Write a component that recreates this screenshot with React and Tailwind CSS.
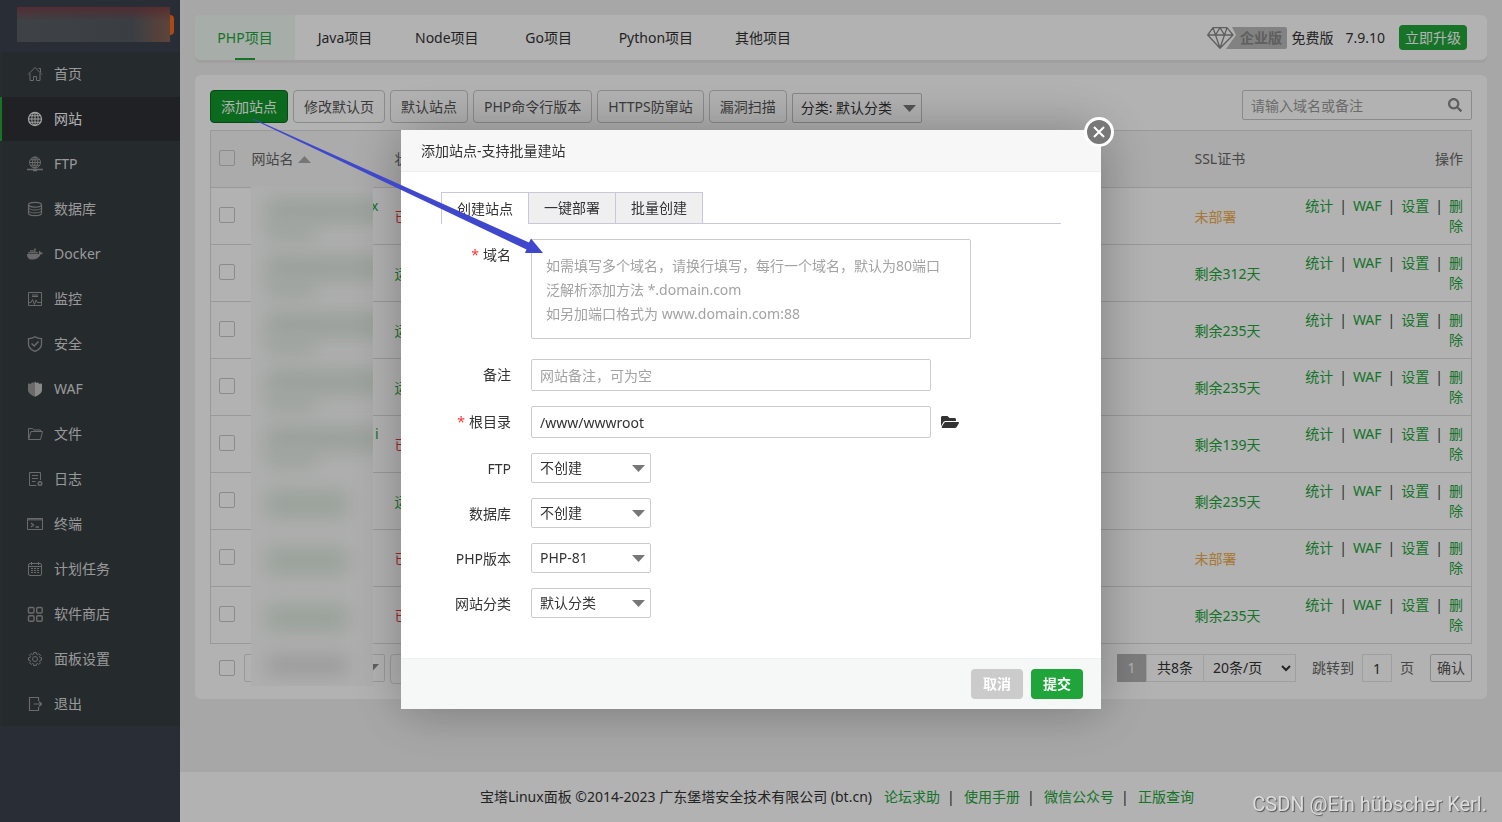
import React, { useState } from 'react';
import clsx from 'clsx';
import { FaFolderOpen, FaSearch, FaDocker } from 'react-icons/fa';

const Svg = ({ children }) => (
  <svg viewBox="0 0 16 16" className="w-4 h-4 shrink-0" fill="none" stroke="currentColor" strokeWidth="1" aria-hidden="true">
    {children}
  </svg>
);

const icons = {
  home: (
    <Svg>
      <path d="M1 8.5 8 1.5l7 7M11.5 2.500h2v4M3 7.500v7h3.500v-4h3v4H13v-7" />
    </Svg>
  ),
  globe: (
    <Svg>
      <circle cx="8" cy="8" r="6.5" strokeWidth="1.300" />
      <ellipse cx="8" cy="8" rx="3.2" ry="6.5" />
      <path d="M8 1.5v13M1.5 8h13M2.5 4.8h11M2.5 11.2h11" />
    </Svg>
  ),
  ftp: (
    <Svg>
      <circle cx="8" cy="6.5" r="5.5" />
      <ellipse cx="8" cy="6.5" rx="2.6" ry="5.5" />
      <path d="M8 1v11M2.5 6.5h11M3.4 3.8h9.2M3.4 9.2h9.2" />
      <path d="M0 13.5h16M6 14.5h4" strokeWidth="1.5" />
    </Svg>
  ),
  database: (
    <Svg>
      <ellipse cx="8" cy="3.7" rx="6.5" ry="2.4" strokeWidth="1.200" />
      <path d="M1.5 3.7v8.6c0 1.3 2.9 2.4 6.5 2.4s6.5-1.1 6.5-2.4V3.7" strokeWidth="1.200" />
      <path d="M1.5 6.6C1.5 7.9 4.4 9 8 9s6.5-1.1 6.5-2.4M1.5 9.5c0 1.3 2.9 2.4 6.5 2.4s6.5-1.1 6.5-2.4" />
    </Svg>
  ),
  docker: <FaDocker className="w-4 h-4 shrink-0" aria-hidden="true" />,
  monitor: (
    <Svg>
      <path d="M1.5 1.5h13v13h-13zM5 4h6M5 5.5h6M1.5 11.5H4l1.5-3 2 5L9 9l1.500 2.500h4" />
    </Svg>
  ),
  shield: (
    <Svg>
      <path d="M8 .8c2 1.400 4.200 1.900 6.500 1.900v5.500c0 3.200-2.700 5.500-6.500 7.200-3.800-1.700-6.500-4-6.500-7.200V2.700C3.800 2.700 6 2.200 8 .8z" strokeWidth="1.300" />
      <path d="M4.500 7.500 7.200 10l4.300-4.500" strokeWidth="1.500" />
    </Svg>
  ),
  waf: (
    <Svg>
      <path d="M8 .5 6.500 2 5 1.300 4 2.700l-3-.2v7C1.500 12.300 5 14.500 8 15.800z" fill="currentColor" stroke="none" />
      <path d="M8 .5 9.500 2l1.500-.7 1 1.400 3-.2v7c-.5 2.800-4 5-7 6.300z" fill="#c4c4c4" stroke="none" />
    </Svg>
  ),
  folder: (
    <Svg>
      <path d="M1.500 13.500v-11h4l1.500 1.500h6.500v1.500M1.500 13.500 4 5.500h11.500l-2 8z" />
    </Svg>
  ),
  log: (
    <Svg>
      <path d="M13.500 9V1.500h-11v13h7M5 4.500h6M5 7.500h6M5 10.500h3.500" />
      <circle cx="13" cy="12.500" r="1.800" strokeWidth="1.400" />
    </Svg>
  ),
  terminal: (
    <Svg>
      <path d="M.5 2.500h15v11H.5z" />
      <path d="M.5 3.500h15" strokeWidth="2" opacity=".7" />
      <path d="m4 7 2.500 2L4 11M8.500 11H12" strokeWidth="1.300" />
    </Svg>
  ),
  calendar: (
    <Svg>
      <rect x="1.500" y="2.500" width="13" height="12" rx="1.500" />
      <path d="M1.500 5.500h13M4.500 1v3M11.500 1v3" />
      <path d="M4 7.500h8M4 9.500h8M4 11.500h8" strokeDasharray="2 1" />
    </Svg>
  ),
  apps: (
    <Svg>
      <g strokeWidth="1.400">
        <rect x="1.500" y="1.500" width="5.500" height="5.500" rx="1.200" />
        <rect x="9.700" y="1.500" width="5.500" height="5.500" rx="1.200" />
        <rect x="1.500" y="9.700" width="5.500" height="5.500" rx="1.200" />
        <rect x="9.700" y="9.700" width="5.500" height="5.500" rx="1.200" />
      </g>
    </Svg>
  ),
  gear: (
    <Svg>
      <path d="M6.700 1.500h2.600v1.600l1.300.6 1.200-1.100 1.700 1.700-1.100 1.200.6 1.200h1.500v2.600H13l-.6 1.300 1.100 1.200-1.700 1.700-1.200-1.100-1.300.6v1.500H6.700V13l-1.300-.6-1.200 1.100-1.700-1.700 1.100-1.200L3 9.300H1.500V6.700H3l.6-1.200-1.100-1.200 1.700-1.700 1.200 1.100 1.300-.6z" />
      <circle cx="8" cy="8" r="2.500" />
    </Svg>
  ),
  exit: (
    <Svg>
      <path d="M11.500 5V1.500h-9v13h9V11M6.500 8h8M12 5.500 14.500 8 12 10.500" strokeWidth="1.200" />
    </Svg>
  ),
};

const menu = [
  { icon: 'home', label: '首页' },
  { icon: 'globe', label: '网站', active: true },
  { icon: 'ftp', label: 'FTP' },
  { icon: 'database', label: '数据库' },
  { icon: 'docker', label: 'Docker' },
  { icon: 'monitor', label: '监控' },
  { icon: 'shield', label: '安全' },
  { icon: 'waf', label: 'WAF' },
  { icon: 'folder', label: '文件' },
  { icon: 'log', label: '日志' },
  { icon: 'terminal', label: '终端' },
  { icon: 'calendar', label: '计划任务' },
  { icon: 'apps', label: '软件商店' },
  { icon: 'gear', label: '面板设置' },
  { icon: 'exit', label: '退出' },
];

const projectTabs = ['PHP项目', 'Java项目', 'Node项目', 'Go项目', 'Python项目', '其他项目'];
const toolbar = ['修改默认页', '默认站点', 'PHP命令行版本', 'HTTPS防窜站', '漏洞扫描'];

const sites = [
  { tail: 'x', running: false, ssl: '未部署' },
  { running: true, ssl: '剩余312天' },
  { running: true, ssl: '剩余235天' },
  { running: true, ssl: '剩余235天' },
  { tail: 'i', running: false, ssl: '剩余139天' },
  { running: true, ssl: '剩余235天' },
  { running: false, ssl: '未部署' },
  { running: false, ssl: '剩余235天' },
];

const Caret = ({ className }) => (
  <svg viewBox="0 0 13 7" className={clsx('w-[13px] h-[7px]', className)} fill="currentColor" aria-hidden="true">
    <path d="M0 0h13L6.500 7z" />
  </svg>
);

const Checkbox = ({ label }) => (
  <input
    type="checkbox"
    aria-label={label}
    className="block appearance-none w-4 h-4 border border-[#c8c8c8] rounded-xs checked:bg-[#20a53a]"
  />
);

const Sidebar = () => (
  <aside className="w-[180px] shrink-0 bg-[#3c424e]">
    <div className="h-[52px] pl-[17px] pt-[7px] flex items-start">
      <div className="w-[153px] h-[35px] bg-linear-to-r from-[#5a5f64] via-[#535a61] via-75% to-[#896050]">
        <div className="h-full bg-linear-to-b from-[#7c3a44]/80 via-transparent via-40% to-transparent" />
      </div>
      <div className="w-1 h-5 mt-2 rounded-r bg-[#f56a23]" />
    </div>
    <nav className="bg-[#363d41]">
      {menu.map((item) => (
        <a
          key={item.label}
          href="#"
          className={clsx(
            'flex items-center gap-[11px] h-11 mb-px pl-[25px] border-l-2 text-sm',
            item.active ? 'bg-[#2d3036] border-[#20a53a] text-white' : 'border-[#3c3f41] text-[#dcdcdc]'
          )}
        >
          <span className={item.active ? 'text-[#e8e8e8]' : 'text-[#999]'}>{icons[item.icon]}</span>
          {item.label}
        </a>
      ))}
    </nav>
  </aside>
);

const TopBar = () => (
  <div className="flex items-center h-[45px] bg-white rounded-md shadow-[0_3px_1px_#e4e4e4] text-sm">
    <div className="flex h-full">
      {projectTabs.map((tab, i) => (
        <button
          key={tab}
          className={clsx(
            'relative min-w-[100px] px-5 h-full',
            i === 0 ? 'bg-[#f0faf3] text-[#20a53a] rounded-l-md' : 'text-[#333]'
          )}
        >
          {tab}
          {i === 0 && <span className="absolute bottom-0 left-10 w-5 h-0.5 bg-[#20a53a]" />}
        </button>
      ))}
    </div>
    <div className="flex items-center ml-auto pr-5 text-[#333]">
      <svg width="80" height="22" viewBox="0 0 80 22" fill="none" aria-label="企业版">
        <path d="M25 0h53a2 2 0 0 1 2 2v18a2 2 0 0 1-2 2H19L29 8z" fill="#bababa" />
        <path d="M6 .7h14l6 7.300L13 21.300.7 8zM.7 8H26M6 .7 8.500 8 13 21M20 .7 17.500 8 13 21M8.500 8 13 .7 17.500 8" stroke="#888" strokeWidth="1.300" strokeLinejoin="round" />
        <text x="33" y="16" fill="#888" fontSize="14" fontWeight="700">企业版</text>
      </svg>
      <span className="ml-1">免费版</span>
      <span className="ml-3">7.9.10</span>
      <button className="ml-3.5 h-[25px] w-[68px] rounded-sm bg-[#20a53a] text-white">立即升级</button>
    </div>
  </div>
);

// blurred cover over the private site names
const NameMask = () => (
  <div className="absolute left-14 top-[112px] bottom-[13px] w-[122px] overflow-hidden bg-[#fafafa]">
    {sites.map((_, i) => (
      <div key={i} className={clsx('h-[57px] pl-4', i < 5 ? 'pt-3' : 'pt-5')}>
        <div className={clsx('blur-[10px] h-6', i < 5 ? 'w-32 bg-[#dae4dc]' : 'w-20 bg-[#d8e6da]')} />
        {i < 5 && <div className="blur-[9px] h-4 w-12 bg-[#dfe9e1]" />}
      </div>
    ))}
    <div className="mt-3 ml-4 w-20 h-5 blur-[9px] bg-[#dedede]" />
  </div>
);

const Bar = () => <span className="mx-[6px] text-[#444]">|</span>;

const SiteTable = () => (
  <table className="w-full mt-[7px] table-fixed border-collapse border border-[#dcdcdc] text-sm text-[#666]">
    <thead>
      <tr className="h-[57px] bg-[#f5f5f5] text-left">
        <th className="w-[33px] pl-2 pb-0.5 font-normal"><Checkbox label="全选" /></th>
        <th className="w-[143px] px-2 font-normal">
          <span className="inline-flex items-center gap-1">
            网站名 <Caret className="rotate-180 text-[#aaa] h-[6px]" />
          </span>
        </th>
        <th className="w-20 px-2 font-normal">状态</th>
        <th />
        <th className="w-[100px] px-2 font-normal">SSL证书</th>
        <th className="w-[185px] px-2 font-normal text-right">操作</th>
      </tr>
    </thead>
    <tbody>
      {sites.map((site, i) => (
        <tr key={i} className="h-[57px] border-t border-[#dcdcdc]">
          <td className="pl-2 pb-0.5"><Checkbox label={`站点 ${i + 1}`} /></td>
          <td className="px-2 pb-5 text-right text-[#20a53a]">{site.tail}</td>
          <td className={clsx('px-2 pt-0.5', site.running ? 'text-[#20a53a]' : 'text-[#e33]')}>
            {site.running ? '运行中' : '已停止'}
          </td>
          <td />
          <td className={clsx('px-2 pt-0.5', site.ssl === '未部署' ? 'text-[#f0ad4e]' : 'text-[#20a53a]')}>{site.ssl}</td>
          <td className="px-2 text-right text-[#20a53a]">
            <a href="#">统计</a><Bar /><a href="#">WAF</a><Bar /><a href="#">设置</a><Bar /><a href="#">删除</a>
          </td>
        </tr>
      ))}
    </tbody>
  </table>
);

const Pagination = () => (
  <div className="flex items-start mt-2.5 h-[30px] pl-[9px] text-sm text-[#333]">
    <div className="pt-1.5"><Checkbox label="选择全部站点" /></div>
    <div className="relative ml-[9px]">
      <select aria-label="批量操作" className="appearance-none w-[141px] h-7 border border-[#dcdcdc] rounded-xs" />
      <Caret className="absolute right-1.5 top-2.5 text-[#888]" />
    </div>
    <button className="ml-[5px] w-20 h-[30px] border border-[#dcdcdc] rounded-sm">批量操作</button>
    <div className="flex items-center ml-auto h-7">
      <span className="flex items-center justify-center w-[29px] h-full bg-[#b4b4b4] text-white">1</span>
      <span className="flex items-center justify-center w-[57px] h-full border border-r-0 border-[#e4e4e4]">共8条</span>
      <div className="relative h-full">
        <select aria-label="每页条数" className="appearance-none w-[93px] h-full pl-[9px] border border-[#e4e4e4]">
          <option>20条/页</option>
        </select>
        <svg viewBox="0 0 10 7" className="absolute right-[5px] top-[11px] w-2.5 h-[7px]" fill="none" stroke="#333" strokeWidth="2" aria-hidden="true">
          <path d="m1 1 4 4 4-4" />
        </svg>
      </div>
      <label htmlFor="jump" className="ml-4 text-[#666]">跳转到</label>
      <input id="jump" defaultValue="1" className="ml-2 w-[30px] h-full border border-[#e4e4e4] text-center" />
      <span className="ml-2 text-[#666]">页</span>
      <button className="ml-4 w-[42px] h-full border border-[#c8c8c8] rounded-xs text-[#555]">确认</button>
    </div>
  </div>
);

const Footer = () => (
  <footer className="flex items-center justify-center mt-auto h-[50px] pr-2 bg-white text-sm text-[#333]">
    <span className="mr-3">宝塔Linux面板 ©2014-2023 广东堡塔安全技术有限公司 (bt.cn)</span>
    {['论坛求助', '使用手册', '微信公众号', '正版查询'].map((link, i) => (
      <React.Fragment key={link}>
        {i > 0 && <span className="w-6 pl-[7px]">|</span>}
        <a href="#" className="text-[#20a53a]">{link}</a>
      </React.Fragment>
    ))}
  </footer>
);

const FormRow = ({ id, label, required, children, className }) => (
  <div className={clsx('flex', className)}>
    <label htmlFor={id} className="w-[70px] mr-5 pt-1.5 text-right whitespace-nowrap">
      {required && <span className="text-[#f33] mr-1">*</span>}
      {label}
    </label>
    {children}
  </div>
);

const FormSelect = ({ id, value }) => (
  <div className="relative">
    <select id={id} className="appearance-none w-[120px] h-[30px] pl-2 border border-[#ccc] rounded-xs">
      <option>{value}</option>
    </select>
    <Caret className="absolute right-1.5 top-3 text-[#777]" />
  </div>
);

const AddSiteDialog = () => {
  const [tab, setTab] = useState(0);

  return (
    <div
      role="dialog"
      aria-labelledby="dialog-title"
      className="relative w-[700px] bg-white shadow-[1px_1px_50px_rgba(0,0,0,0.3)] text-sm text-[#333]"
    >
      <button
        aria-label="关闭"
        className="absolute -top-[13px] -right-[13px] flex items-center justify-center w-[30px] h-[30px] rounded-full border-3 border-white bg-[#787878]"
      >
        <svg viewBox="0 0 12 12" className="w-3 h-3" stroke="#fff" strokeWidth="2" aria-hidden="true">
          <path d="m1 1 10 10M11 1 1 11" />
        </svg>
      </button>
      <h3 id="dialog-title" className="h-[42px] pl-5 leading-[41px] bg-[#f7f7f7] border-b border-[#eee]">
        添加站点-支持批量建站
      </h3>

      <div className="px-10 pt-5 pb-10">
        <div className="flex border-b border-[#cac8d8]">
          {['创建站点', '一键部署', '批量创建'].map((name, i) => (
            <button
              key={name}
              onClick={() => setTab(i)}
              className={clsx(
                'h-8 border-t border-l border-[#cac8d8] -mb-px',
                i === 2 ? 'w-[88px] border-r' : 'w-[87px]',
                tab === i ? 'bg-white' : 'bg-[#efefef] border-b'
              )}
            >
              {name}
            </button>
          ))}
        </div>

        <form className="pt-[15px]" onSubmit={(e) => e.preventDefault()}>
          <FormRow id="domain" label="域名" required className="mb-5">
            <textarea
              id="domain"
              placeholder={'如需填写多个域名，请换行填写，每行一个域名，默认为80端口\n泛解析添加方法 *.domain.com\n如另加端口格式为 www.domain.com:88'}
              className="w-[440px] h-[100px] px-3.5 py-3.5 leading-6 border border-[#ccc] rounded-xs resize-none overflow-hidden placeholder:text-[#a3a3a3]"
            />
          </FormRow>
          <FormRow id="remark" label="备注" className="mb-[15px]">
            <input
              id="remark"
              placeholder="网站备注，可为空"
              className="w-[400px] h-8 px-2 border border-[#ccc] rounded-xs placeholder:text-[#a3a3a3]"
            />
          </FormRow>
          <FormRow id="path" label="根目录" required className="mb-[15px]">
            <input id="path" defaultValue="/www/wwwroot" className="w-[400px] h-8 px-2 border border-[#ccc] rounded-xs" />
            <button aria-label="选择目录" className="ml-2.5">
              <FaFolderOpen className="w-[18px] h-4" />
            </button>
          </FormRow>
          <FormRow id="ftp" label="FTP" className="mb-[15px]">
            <FormSelect id="ftp" value="不创建" />
          </FormRow>
          <FormRow id="db" label="数据库" className="mb-[15px]">
            <FormSelect id="db" value="不创建" />
          </FormRow>
          <FormRow id="php" label="PHP版本" className="mb-[15px]">
            <FormSelect id="php" value="PHP-81" />
          </FormRow>
          <FormRow id="category" label="网站分类">
            <FormSelect id="category" value="默认分类" />
          </FormRow>
        </form>
      </div>

      <div className="flex justify-end gap-2 h-[51px] pt-2.5 pr-[18px] bg-[#f6f8f8] border-t border-[#edf1f2] font-bold text-white">
        <button className="w-[52px] h-[30px] rounded-sm bg-[#cbcbcb]">取消</button>
        <button className="w-[52px] h-[30px] rounded-sm bg-[#20a53a]">提交</button>
      </div>
    </div>
  );
};

const App = () => (
  <div className="flex min-h-screen bg-[#f0f0f0] font-['Noto_Sans','Noto_Sans_CJK_SC',sans-serif]">
    <Sidebar />
    <main className="flex flex-col flex-1 min-w-0">
      <div className="p-[15px] pb-0">
        <TopBar />
        <section className="relative mt-[15px] p-[15px] bg-white rounded-md">
          <div className="flex items-end gap-[5px] text-sm text-[#555]">
            <button className="h-[33px] px-2.5 border border-[#0c6b1e] rounded-sm bg-[#10982a] text-white whitespace-nowrap">添加站点</button>
            {toolbar.map((name) => (
              <button key={name} className="h-[33px] px-2.5 border border-[#c8c8c8] rounded-sm whitespace-nowrap">{name}</button>
            ))}
            <div className="relative">
              <select aria-label="分类" className="appearance-none block w-[130px] h-[30px] pl-2 border border-[#c0c0c0] rounded-xs text-[#333]">
                <option>分类: 默认分类</option>
              </select>
              <Caret className="absolute right-1.5 top-3 text-[#777]" />
            </div>
            <div className="relative ml-auto self-start">
              <input
                aria-label="搜索站点"
                placeholder="请输入域名或备注"
                className="block w-[230px] h-[30px] px-2 border border-[#c8c8c8] rounded-xs placeholder:text-[#999]"
              />
              <FaSearch className="absolute right-2.5 top-2 w-3.5 h-3.5 text-[#888]" />
            </div>
          </div>
          <SiteTable />
          <Pagination />
          <NameMask />
        </section>
      </div>
      <Footer />
    </main>

    <div className="fixed inset-0 flex items-start justify-center pt-[130px] bg-black/30">
      <AddSiteDialog />
    </div>

    {/* pointer from the add button to the domain field */}
    <svg className="absolute left-[250px] top-[115px] w-[300px] h-[145px] pointer-events-none" viewBox="250 115 300 145" fill="#3f48cc" aria-hidden="true">
      <path d="M252.500 119.300 253 118.500 529 242.500 531 238.500 543 253 525 253 526.500 249.500z" />
    </svg>

    <p className="fixed bottom-1 right-[15px] text-xl leading-7 text-[#dcdcdc] font-['Roboto',sans-serif] [text-shadow:1px_1px_1px_#555]">
      CSDN @Ein hübscher Kerl.
    </p>
  </div>
);

export default App;
